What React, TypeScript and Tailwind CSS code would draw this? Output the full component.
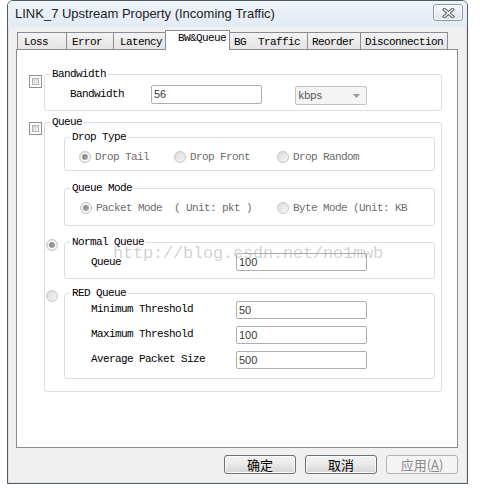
import React from "react";

const mono =
  "font-['Liberation_Mono',monospace] text-[11px] tracking-[-0.6px] leading-[12px] whitespace-pre";

function Checkbox({ className = "" }: { className?: string }) {
  return (
    <div
      className={
        "w-[13px] h-[13px] shrink-0 border border-[#8f8f8f] bg-white p-[2px] " +
        className
      }
    >
      <div className="w-full h-full border border-[#b4b4b4] bg-linear-to-br from-[#d4d4d4] to-[#f4f4f4]" />
    </div>
  );
}

function Radio({
  checked,
  className = "",
}: {
  checked?: boolean;
  className?: string;
}) {
  return (
    <div
      className={
        "w-[12px] h-[12px] shrink-0 rounded-full border border-[#c6c6c6] bg-linear-to-br from-[#dadada] to-[#f6f6f6] flex items-center justify-center " +
        className
      }
    >
      {checked && (
        <div className="w-[8px] h-[8px] rounded-full bg-white flex items-center justify-center">
          <div className="w-[6px] h-[6px] rounded-full bg-linear-to-br from-[#7d7d7d] to-[#b0b0b0]" />
        </div>
      )}
    </div>
  );
}

function RadioItem({
  label,
  checked,
  className = "",
}: {
  label: string;
  checked?: boolean;
  className?: string;
}) {
  return (
    <div className={"flex items-center gap-[4px] " + className}>
      <Radio checked={checked} />
      <span className={mono + " text-[#6d6d6d]"}>{label}</span>
    </div>
  );
}

function Group({
  label,
  className = "",
  children,
}: {
  label: string;
  className?: string;
  children?: React.ReactNode;
}) {
  return (
    <div
      className={"border border-[#d5dfe5] rounded-[3px] " + className}
    >
      <div
        className={
          "-mt-[7px] ml-[5px] w-fit bg-white px-[2px] text-black " + mono
        }
      >
        {label}
      </div>
      {children}
    </div>
  );
}

function Input({ value, className = "" }: { value: string; className?: string }) {
  return (
    <div
      className={
        "h-[18px] shrink-0 border border-[#abadb3] rounded-[2px] bg-white pl-[2px] flex items-center font-['Liberation_Sans',sans-serif] text-[11px] text-[#3a3a3a] " +
        className
      }
    >
      {value}
    </div>
  );
}

function Button({
  children,
  disabled,
}: {
  children: React.ReactNode;
  disabled?: boolean;
}) {
  return (
    <div
      className={
        "w-[72px] h-[19px] rounded-[3px] border flex items-center justify-center font-['Noto_Sans_CJK_SC',sans-serif] text-[13px] leading-none " +
        (disabled
          ? "border-[#adb2b5] bg-[#f4f4f4] text-[#8a8a8a]"
          : "border-[#707070] bg-linear-to-b from-[#f3f3f3] via-[#e9e9e9] to-[#d4d4d4] text-black shadow-[inset_0_0_0_1px_#fbfbfb]")
      }
    >
      {children}
    </div>
  );
}

const tabs: { label: string; w: string; pl: string; sel?: boolean }[] = [
  { label: "Loss", w: "w-[50px]", pl: "pl-[6px]" },
  { label: "Error", w: "w-[48px]", pl: "pl-[5px]" },
  { label: "Latency", w: "w-[53px]", pl: "pl-[6px]" },
  { label: "BW&Queue", w: "w-[65px]", pl: "pl-[12px]", sel: true },
  { label: "BG  Traffic", w: "w-[79px]", pl: "pl-[4px]" },
  { label: "Reorder", w: "w-[54px]", pl: "pl-[4px]" },
  { label: "Disconnection", w: "w-[88px]", pl: "pl-[4px]" },
];

export default function App() {
  return (
    <div className="w-[480px] h-[488px] bg-white relative overflow-hidden">
      <div className="ml-[7px] w-[461px] h-[484px] border border-[#555a60] rounded-t-[6px] flex flex-col bg-[#f0f0f0] overflow-hidden">
        {/* Title bar */}
        <div className="h-[26px] shrink-0 bg-linear-to-b from-[#eef3fa] to-[#e2eaf4] flex items-start pl-[7px] pr-[4px] pt-[3px]">
          <div className="mt-[2px] font-['Liberation_Sans',sans-serif] text-[13px] leading-[16px] text-[#1c1c1c]">
            LINK_7 Upstream Property (Incoming Traffic)
          </div>
          <div className="ml-auto w-[30px] h-[17px] rounded-[3px] border border-[#8d9aab] bg-linear-to-b from-[#f6f8fb] to-[#dfe5ec] flex items-center justify-center shadow-[inset_0_0_0_1px_#ffffff]">
            <svg width="13" height="10" viewBox="0 0 13 10">
              <path
                d="M2.5 1.5 L10.5 8.5 M10.5 1.5 L2.5 8.5"
                stroke="#5c5f63"
                strokeWidth="3.4"
                strokeLinecap="square"
              />
              <path
                d="M2.5 1.5 L10.5 8.5 M10.5 1.5 L2.5 8.5"
                stroke="#f4f4f4"
                strokeWidth="1.5"
                strokeLinecap="square"
              />
            </svg>
          </div>
        </div>

        {/* Client */}
        <div className="flex-1 flex flex-col border-x border-b border-[#d9e2ee] pl-[7px] pr-[8px] pt-[3px]">
          {/* Tabs */}
          <div className="h-[19px] flex items-end pl-[1px]">
            {tabs.map((t, i) =>
              t.sel ? (
                <div
                  key={t.label}
                  className={
                    "h-[20px] -mb-[1px] -ml-[1px] relative z-10 bg-white border-t border-x border-[#898c95] pt-[1px] " +
                    t.w +
                    " " +
                    t.pl
                  }
                >
                  <div className={mono + " text-black"}>{t.label}</div>
                </div>
              ) : (
                <div
                  key={t.label}
                  className={
                    "h-[17px] border-t border-x border-[#898c95] bg-linear-to-b from-[#f3f3f3] to-[#e4e4e4] pt-[3px] " +
                    (i === 0 ? "" : "-ml-[1px] ") +
                    t.w +
                    " " +
                    t.pl
                  }
                >
                  <div className={mono + " text-black"}>{t.label}</div>
                </div>
              )
            )}
          </div>

          {/* Panel */}
          <div className="w-[442px] h-[399px] border border-[#898c95] bg-white pl-[12px] pt-[24px] flex flex-col">
            {/* Bandwidth */}
            <div className="flex items-start gap-[2px]">
              <Checkbox className="mt-[1px]" />
              <Group label="Bandwidth" className="w-[398px]">
                <div className="mt-[5px] mb-[5px] flex items-start pl-[25px]">
                  <div className={mono + " w-[81px] mt-[3px] text-black"}>
                    Bandwidth
                  </div>
                  <Input value="56" className="w-[111px] h-[19px]" />
                  <div className="ml-[33px] mt-[1px] w-[72px] h-[19px] border border-[#c2c2c2] rounded-[2px] bg-[#f4f4f4] flex items-center pl-[2px] pr-[6px]">
                    <span className={mono + " text-[#555]"}>kbps</span>
                    <svg className="ml-auto" width="7" height="4" viewBox="0 0 7 4">
                      <path d="M0 0 H7 L3.5 4 Z" fill="#9a9a9a" />
                    </svg>
                  </div>
                </div>
              </Group>
            </div>

            {/* Queue */}
            <div className="mt-[11px] flex items-start gap-[2px]">
              <Checkbox />
              <Group label="Queue" className="w-[398px]">
                <Group label="Drop Type" className="ml-[19px] mt-[9px] w-[371px]">
                  <div className="mt-[7px] mb-[7px] h-[13px] flex items-center pl-[14px]">
                    <RadioItem checked label="Drop Tail" className="w-[95px]" />
                    <RadioItem label="Drop Front" className="w-[103px]" />
                    <RadioItem label="Drop Random" />
                  </div>
                </Group>

                <Group label="Queue Mode" className="ml-[19px] mt-[17px] w-[371px]">
                  <div className="mt-[7px] mb-[11px] h-[13px] flex items-center pl-[15px]">
                    <RadioItem
                      checked
                      label="Packet Mode  ( Unit: pkt )"
                      className="w-[197px]"
                    />
                    <RadioItem label="Byte Mode (Unit: KB" />
                  </div>
                </Group>

                <div className="mt-[16px] flex items-start">
                  <Radio checked className="ml-[1px] -mt-[3px]" />
                  <Group label="Normal Queue" className="ml-[6px] w-[371px]">
                    <div className="mt-[5px] mb-[7px] flex items-center pl-[26px]">
                      <div className={mono + " w-[145px] text-black"}>Queue</div>
                      <Input value="100" className="w-[131px]" />
                    </div>
                  </Group>
                </div>

                <div className="mt-[14px] mb-[12px] flex items-start">
                  <Radio className="ml-[1px] -mt-[3px]" />
                  <Group label="RED Queue" className="ml-[6px] w-[371px]">
                    <div className="mt-[2px] mb-[9px] flex flex-col gap-[7px] pl-[26px]">
                      {[
                        ["Minimum Threshold", "50"],
                        ["Maximum Threshold", "100"],
                        ["Average Packet Size", "500"],
                      ].map(([l, v]) => (
                        <div key={l} className="flex items-center">
                          <div className={mono + " w-[145px] -mt-[2px] text-black"}>
                            {l}
                          </div>
                          <Input value={v} className="w-[131px]" />
                        </div>
                      ))}
                    </div>
                  </Group>
                </div>
              </Group>
            </div>
          </div>

          {/* Buttons */}
          <div className="mt-[7px] flex justify-end gap-[9px]">
            <Button>确定</Button>
            <Button>取消</Button>
            <Button disabled>
              应用(<span className="underline">A</span>)
            </Button>
          </div>
        </div>
      </div>

      {/* Watermark */}
      <div className="absolute left-[113px] top-[244px] pointer-events-none font-['Liberation_Mono',monospace] text-[17px] leading-[20px] tracking-[-0.2px] text-[#9a9a9a]/45">
        http://blog.csdn.net/no1mwb
      </div>
    </div>
  );
}
